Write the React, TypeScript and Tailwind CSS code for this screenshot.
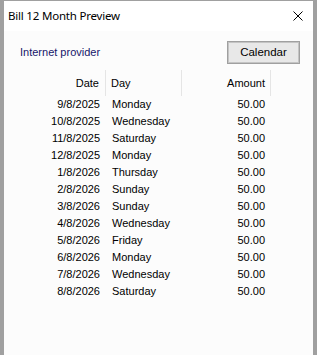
import React from "react";

const rows: [string, string][] = [
  ["9/8/2025", "Monday"],
  ["10/8/2025", "Wednesday"],
  ["11/8/2025", "Saturday"],
  ["12/8/2025", "Monday"],
  ["1/8/2026", "Thursday"],
  ["2/8/2026", "Sunday"],
  ["3/8/2026", "Sunday"],
  ["4/8/2026", "Wednesday"],
  ["5/8/2026", "Friday"],
  ["6/8/2026", "Monday"],
  ["7/8/2026", "Wednesday"],
  ["8/8/2026", "Saturday"],
];

export default function App() {
  return (
    <div className="w-[317px] h-[355px] bg-[#a0a0a0] pt-px px-[4px] flex flex-col overflow-hidden">
      <div className="flex-1 bg-[#fcfcfc] flex flex-col">
        <div className="h-[30px] flex items-center justify-between pl-[4px] pr-[10px] bg-white">
          <span className="text-[11.5px] tracking-[-0.2px] text-black leading-none [font-family:'Noto_Sans','Open_Sans',sans-serif]">
            Bill 12 Month Preview
          </span>
          <svg width="10" height="10" viewBox="0 0 10 10" className="block">
            <path d="M0.5 0.5 L9.5 9.5 M9.5 0.5 L0.5 9.5" stroke="#000" strokeWidth="1" fill="none" />
          </svg>
        </div>
        <div className="[font-family:'Liberation_Sans',Arial,sans-serif] text-[11px] text-black">
          <div className="mt-[10px] h-[23px] flex items-center justify-between pl-[16px] pr-[13px]">
            <span className="text-[#16166a]">Internet provider</span>
            <button className="w-[73px] h-[23px] border border-[#a0a0a0] bg-[#e8e8e8] shadow-[inset_0_0_0_1px_#c4c4c4] flex items-center justify-center text-black text-[11.5px]">
              Calendar
            </button>
          </div>
          <div className="mt-[6px] ml-[16px]">
            <div className="flex h-[26px]">
              <div className="w-[86px] flex items-center justify-end pr-[6px] border-r border-[#e5e5e5]">Date</div>
              <div className="w-[76px] flex items-center pl-[5px] border-r border-[#e5e5e5]">Day</div>
              <div className="w-[89px] flex items-center justify-end pr-[5px] border-r border-[#e5e5e5]">Amount</div>
            </div>
            {rows.map(([d, day]) => (
              <div key={d} className="flex h-[17px] items-center">
                <div className="w-[86px] text-right pr-[6px]">{d}</div>
                <div className="w-[76px] pl-[6px]">{day}</div>
                <div className="w-[89px] text-right pr-[6px]">50.00</div>
              </div>
            ))}
          </div>
        </div>
      </div>
    </div>
  );
}
